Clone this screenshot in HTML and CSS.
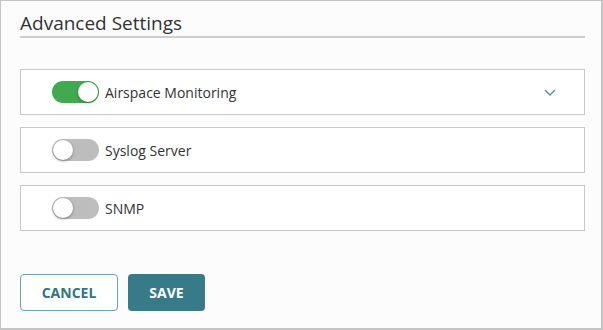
FILE: index.html
```
<!DOCTYPE html>
<html lang="en">
<head>
    <meta charset="UTF-8">
    <title>Advanced Settings</title>
    <link rel="stylesheet" href="styles.css">
</head>
<body>
    <div class="panel">
        <div class="panel-title">Advanced Settings</div>

        <div class="settings-list">
            <div class="setting-row">
                <span class="toggle on"><span class="knob"></span></span>
                <span class="setting-label">Airspace Monitoring</span>
                <svg class="chevron" width="12" height="7" viewBox="0 0 12 7">
                    <path d="M1 1 L6 6 L11 1" fill="none" stroke="#4f93a6" stroke-width="1.4"/>
                </svg>
            </div>
            <div class="setting-row">
                <span class="toggle"><span class="knob"></span></span>
                <span class="setting-label">Syslog Server</span>
            </div>
            <div class="setting-row">
                <span class="toggle"><span class="knob"></span></span>
                <span class="setting-label">SNMP</span>
            </div>
        </div>

        <div class="actions">
            <button class="btn btn-outline">CANCEL</button>
            <button class="btn btn-primary">SAVE</button>
        </div>
    </div>
</body>
</html>
```

FILE: styles.css
```
* {
    margin: 0;
    padding: 0;
    box-sizing: border-box;
}

body {
    font-family: 'Open Sans', 'Liberation Sans', sans-serif;
    background: #fff;
    color: #333;
}

.panel {
    width: 603px;
    height: 330px;
    background: #fcfcfc;
    border: 1px solid #c4c4c4;
    border-right-width: 2px;
    border-bottom-width: 2px;
    padding: 0 16px 0 19px;
}

.panel-title {
    font-size: 19px;
    line-height: 26px;
    padding-top: 9px;
    border-bottom: 2px solid #cfcfcf;
    color: #333;
}

.settings-list {
    margin-top: 31px;
    display: flex;
    flex-direction: column;
    gap: 12px;
}

.setting-row {
    height: 46px;
    background: #fff;
    border: 1px solid #c8c8c8;
    display: flex;
    align-items: center;
    padding: 0 28px 0 31px;
}

.toggle {
    width: 47px;
    height: 22px;
    border-radius: 11px;
    background: #bdbdbd;
    position: relative;
    flex-shrink: 0;
}

.toggle.on {
    background: #3fab4e;
}

.knob {
    position: absolute;
    top: 1px;
    left: 1px;
    width: 20px;
    height: 20px;
    border-radius: 50%;
    background: #fff;
    box-shadow: 0 1px 3px rgba(0, 0, 0, 0.35);
}

.toggle.on .knob {
    left: 26px;
}

.setting-label {
    margin-left: 6px;
    font-size: 14px;
    color: #333;
}

.chevron {
    margin-left: auto;
}

.actions {
    margin-top: 43px;
    display: flex;
    gap: 10px;
}

.btn {
    height: 37px;
    border-radius: 4px;
    font-family: 'Open Sans', 'Liberation Sans', sans-serif;
    font-size: 14px;
    font-weight: bold;
    cursor: pointer;
}

.btn-outline {
    width: 98px;
    background: #fff;
    color: #2f7683;
    border: 1.5px solid #6aa3b0;
}

.btn-primary {
    width: 77px;
    background: #367b87;
    color: #fff;
    border: none;
}
```
